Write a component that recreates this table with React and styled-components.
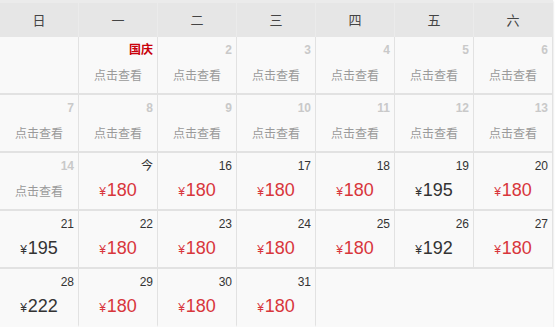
import React from "react";
import styled, { createGlobalStyle } from "styled-components";

const Global = createGlobalStyle`
  html, body { margin: 0; padding: 0; background: #fff; }
  body { font-family: "Liberation Sans", "Noto Sans CJK SC", Arial, sans-serif; }
`;

const Calendar = styled.div`
  width: 553px;
  background: #f9f9f9;
  box-shadow: 0 1px 2px rgba(0, 0, 0, 0.18);
`;

const Head = styled.div`
  display: grid;
  grid-template-columns: repeat(7, 79px);
  height: 37px;
  background: #e6e6e6;
  box-shadow: inset 0 3px 0 #ebebeb;
`;

const HeadCell = styled.div`
  display: flex;
  align-items: center;
  justify-content: center;
  padding-top: 1px;
  font-size: 13px;
  color: #444;
  border-right: 1px solid ${(p) => (p.$last ? "transparent" : "#ebebeb")};
`;

const Body = styled.div`
  display: grid;
  grid-template-columns: repeat(7, 79px);
  grid-auto-rows: 58px;
`;

const Cell = styled.div`
  display: flex;
  flex-direction: column;
  box-sizing: border-box;
  border-right: 1px solid ${(p) => (p.$blank ? "transparent" : "#e2e2e2")};
  border-bottom: 2px solid ${(p) => (p.$noBottom ? "transparent" : "#e2e2e2")};
  grid-column: ${(p) => p.$span || "auto"};
`;

const DayNum = styled.div`
  height: 16px;
  line-height: 16px;
  padding: 5px 4px 0 0;
  text-align: right;
  font-size: 12px;
  color: ${(p) => (p.$past ? "#c9c9c9" : "#333")};
  font-weight: ${(p) => (p.$past ? "bold" : "normal")};
`;

const Holiday = styled.span`
  color: #c8000a;
  font-weight: bold;
  font-size: 12px;
`;

const ViewLink = styled.div`
  margin-top: 9px;
  text-align: center;
  font-size: 12px;
  line-height: 18px;
  color: #9a9a9a;
`;

const Price = styled.div`
  margin-top: 4px;
  text-align: center;
  line-height: 24px;
  font-size: 18px;
  color: ${(p) => (p.$low ? "#d8363c" : "#333")};
`;

const Yen = styled.span`
  font-size: 12px;
  margin-right: 1px;
`;

const weekdays = ["日", "一", "二", "三", "四", "五", "六"];

const prices = {
  15: 180, 16: 180, 17: 180, 18: 180, 19: 195, 20: 180,
  21: 195, 22: 180, 23: 180, 24: 180, 25: 180, 26: 192, 27: 180,
  28: 222, 29: 180, 30: 180, 31: 180,
};

export default function App() {
  const cells = [<Cell key="e0" />];
  for (let d = 1; d <= 31; d++) {
    const past = d <= 14;
    let label = d;
    if (d === 1) label = <Holiday>国庆</Holiday>;
    if (d === 15) label = "今";
    cells.push(
      <Cell key={d} $noBottom={d >= 28}>
        <DayNum $past={past && d !== 1}>{label}</DayNum>
        {past ? (
          <ViewLink>点击查看</ViewLink>
        ) : (
          <Price $low={prices[d] === 180}>
            <Yen>¥</Yen>
            {prices[d]}
          </Price>
        )}
      </Cell>
    );
  }
  cells.push(<Cell key="tail" $blank $noBottom $span="span 3" />);
  return (
    <>
      <Global />
      <Calendar>
        <Head>
          {weekdays.map((w, i) => (
            <HeadCell key={w} $last={i === 6}>{w}</HeadCell>
          ))}
        </Head>
        <Body>{cells}</Body>
      </Calendar>
    </>
  );
}
